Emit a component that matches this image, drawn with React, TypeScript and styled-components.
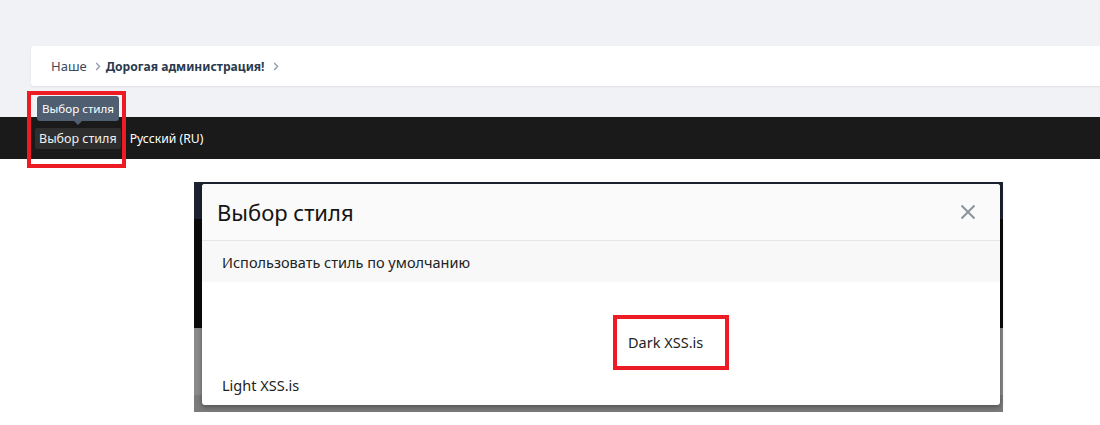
import * as React from 'react';
import styled, { createGlobalStyle } from 'styled-components';

const GlobalStyle = createGlobalStyle`
    html, body {
        margin: 0;
        padding: 0;
        background: #ffffff;
        font-family: "Noto Sans", "Open Sans", sans-serif;
    }
    * {
        box-sizing: border-box;
    }
`;

const Chevron: React.FC = () => (
    <svg width="6" height="9" viewBox="0 0 6 9" fill="none">
        <path d="M1.2 1L4.6 4.5L1.2 8" stroke="#8d9aac" strokeWidth="1.3" />
    </svg>
);

const CloseIcon: React.FC = () => (
    <svg width="16" height="16" viewBox="0 0 16 16" fill="none">
        <path d="M1.5 1.5L14.5 14.5M14.5 1.5L1.5 14.5" stroke="#8a929b" strokeWidth="2" />
    </svg>
);

const App: React.FC = () => (
    <Root>
        <GlobalStyle />
        <TopArea>
            <Breadcrumbs>
                <Crumb>Наше</Crumb>
                <Chevron />
                <Crumb $current>Дорогая администрация!</Crumb>
                <Chevron />
            </Breadcrumbs>
        </TopArea>
        <FooterBar>
            <StyleChooser>
                <Tooltip>Выбор стиля</Tooltip>
                <BarButton>Выбор стиля</BarButton>
                <Highlight />
            </StyleChooser>
            <BarLink>Русский (RU)</BarLink>
        </FooterBar>
        <Shot>
            <Modal>
                <ModalHeader>
                    <ModalTitle>Выбор стиля</ModalTitle>
                    <CloseButton>
                        <CloseIcon />
                    </CloseButton>
                </ModalHeader>
                <DefaultRow>Использовать стиль по умолчанию</DefaultRow>
                <StyleGrid>
                    <StyleCell $col={2} $row={1}>
                        <Marked>Dark XSS.is</Marked>
                    </StyleCell>
                    <StyleCell $col={1} $row={2}>
                        Light XSS.is
                    </StyleCell>
                </StyleGrid>
            </Modal>
        </Shot>
    </Root>
);

const Root = styled.div`
    width: 1100px;
    min-height: 425px;
    overflow: hidden;
`;

const TopArea = styled.div`
    background: #f1f2f6;
    padding: 46px 0 31px 31px;
`;

const Breadcrumbs = styled.div`
    display: flex;
    align-items: center;
    gap: 5px;
    height: 40px;
    padding-left: 20px;
    background: #ffffff;
    border-radius: 3px 0 0 3px;
    box-shadow: 0 1px 2px rgba(0, 0, 0, 0.08);
`;

const Crumb = styled.span<{ $current?: boolean }>`
    font-size: ${(p) => (p.$current ? '12.1px' : '13px')};
    color: ${(p) => (p.$current ? '#2a3a4e' : '#3d4a5b')};
    font-weight: ${(p) => (p.$current ? 700 : 400)};
    margin-right: 3px;
`;

const FooterBar = styled.div`
    display: flex;
    align-items: center;
    gap: 9px;
    height: 42px;
    padding-left: 35px;
    background: #1a1a1a;
`;

const StyleChooser = styled.div`
    position: relative;
`;

const Tooltip = styled.div`
    position: absolute;
    left: 2px;
    top: -32px;
    height: 25px;
    padding: 0 5px;
    display: flex;
    align-items: center;
    background: #4f5e70;
    color: #ffffff;
    font-size: 11.6px;
    white-space: nowrap;
    border-radius: 3px;

    &::after {
        content: '';
        position: absolute;
        left: 50%;
        bottom: -4px;
        margin-left: -4px;
        border-left: 4px solid transparent;
        border-right: 4px solid transparent;
        border-top: 4px solid #4f5e70;
    }
`;

const BarButton = styled.div`
    height: 21px;
    padding: 0 4px;
    display: flex;
    align-items: center;
    background: #2e2e2e;
    color: #f0f0f0;
    font-size: 12.5px;
    border-radius: 2px;
    white-space: nowrap;
`;

const Highlight = styled.div`
    position: absolute;
    left: -8px;
    top: -37px;
    width: 99px;
    height: 77px;
    border: 4px solid #ed1c24;
    pointer-events: none;
`;

const BarLink = styled.span`
    color: #ffffff;
    font-size: 12.2px;
`;

const Shot = styled.div`
    width: 809px;
    height: 230px;
    margin: 23px 0 0 194px;
    padding: 2px 3px 7px 8px;
    background: linear-gradient(
        to bottom,
        #1c2230 0px,
        #1c2230 37px,
        #0b0b0b 37px,
        #0b0b0b 146px,
        #8a8a8a 146px,
        #8a8a8a 213px,
        #7b7b7b 213px
    );
`;

const Modal = styled.div`
    height: 100%;
    display: flex;
    flex-direction: column;
    background: #ffffff;
    border-radius: 3px;
    box-shadow: 0 2px 5px rgba(0, 0, 0, 0.35);
    overflow: hidden;
`;

const ModalHeader = styled.div`
    flex-shrink: 0;
    display: flex;
    align-items: center;
    justify-content: space-between;
    height: 57px;
    padding: 0 24px 0 15px;
    background: #fafafa;
    border-bottom: 1px solid #e6e6e6;
`;

const ModalTitle = styled.div`
    font-size: 22px;
    color: #141414;
`;

const CloseButton = styled.div`
    display: flex;
    align-items: center;
`;

const DefaultRow = styled.div`
    flex-shrink: 0;
    height: 41px;
    display: flex;
    align-items: center;
    padding-left: 20px;
    background: #f8f8f8;
    font-size: 14.5px;
    color: #222222;
`;

const StyleGrid = styled.div`
    flex: 1;
    min-height: 0;
    display: grid;
    grid-template-columns: 391px 1fr;
    grid-auto-rows: auto;
    align-content: start;
    row-gap: 5px;
    padding: 33px 0 0 20px;
`;

const StyleCell = styled.div<{ $col: number; $row: number }>`
    grid-column: ${(p) => p.$col};
    grid-row: ${(p) => p.$row};
    font-size: 14.5px;
    line-height: 20px;
    color: #222222;
`;

const Marked = styled.span`
    display: inline-block;
    height: 55px;
    padding: 13px 22px 0 11px;
    border: 4px solid #ed1c24;
`;

export default App;
